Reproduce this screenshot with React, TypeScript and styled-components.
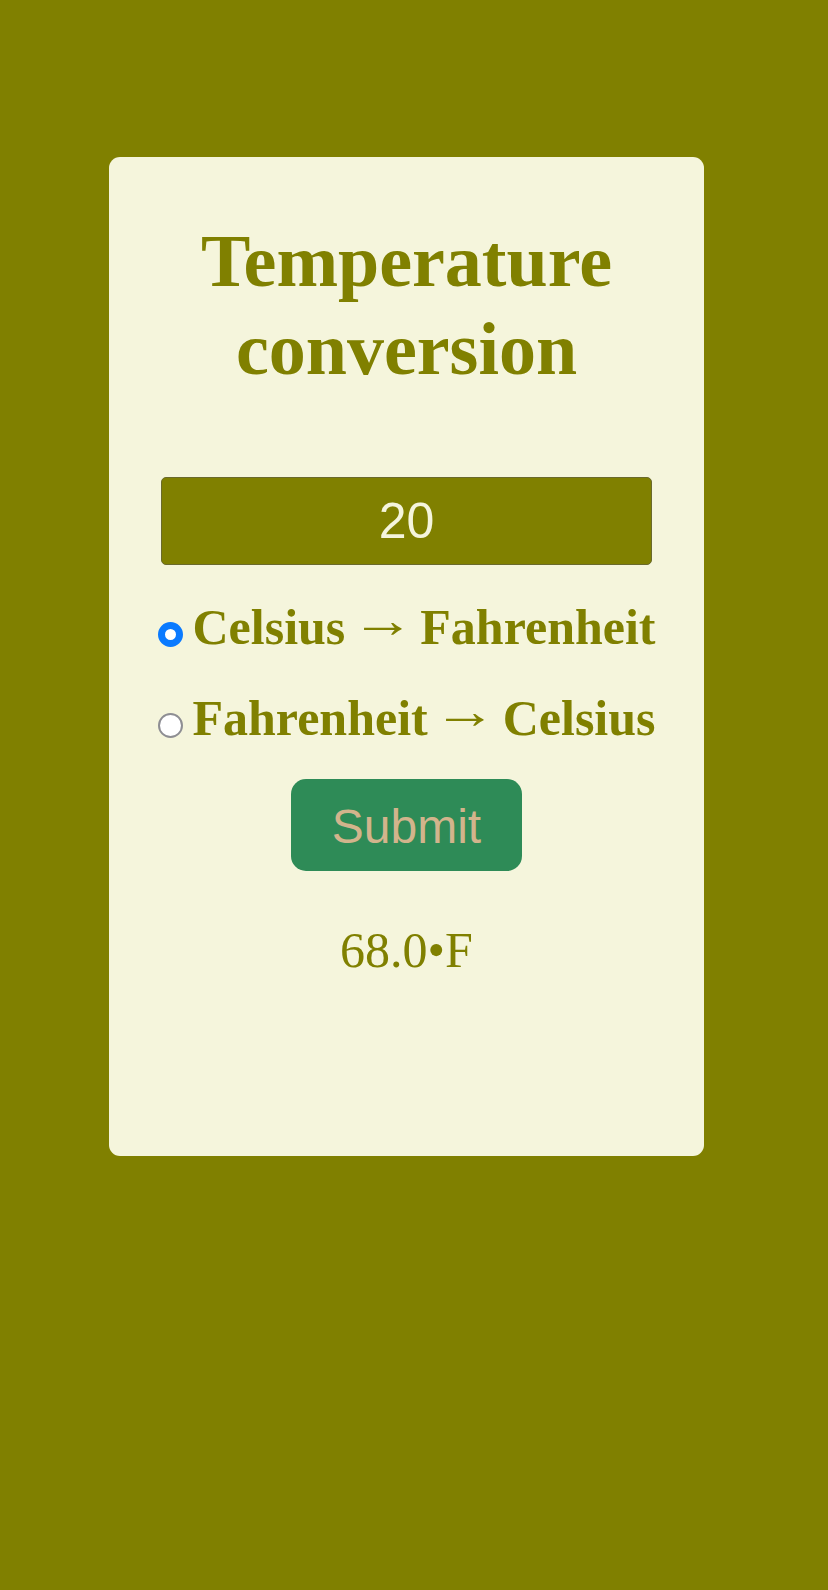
import React, { useState } from "react";
import styled, { createGlobalStyle } from "styled-components";

const GlobalStyle = createGlobalStyle`
  html, body {
    margin: 0;
    padding: 0;
    background: #808000;
  }
  body {
    font-family: "Liberation Serif", "Times New Roman", serif;
    min-height: 1590px;
  }
  * { box-sizing: border-box; }
`;

const Page = styled.div`
  display: flex;
  align-items: flex-start;
  padding: 157px 0 0 109px;
  min-height: 1590px;
`;

const Card = styled.form`
  width: 595px;
  background: #f5f5dc;
  border-radius: 11px;
  padding: 60px 52px 176px;
  display: flex;
  flex-direction: column;
  align-items: stretch;
`;

const Title = styled.h1`
  margin: 0;
  font-family: "Liberation Serif", "Times New Roman", serif;
  font-weight: 700;
  font-size: 74px;
  line-height: 88px;
  color: #808000;
  text-align: center;
`;

const NumberInput = styled.input`
  margin: 84px 0 16.5px;
  height: 88px;
  width: 100%;
  background: #808000;
  border: 1px solid #6a6a2c;
  border-radius: 5px;
  color: #f5f5dc;
  font-family: "Liberation Sans", Arial, sans-serif;
  font-size: 50px;
  text-align: center;
  outline: none;
  padding: 0;
`;

const OptionRow = styled.label`
  display: flex;
  justify-content: center;
  align-items: flex-start;
  gap: 10px;
  height: 91px;
  cursor: pointer;
`;

const RadioDot = styled.span<{ $checked: boolean }>`
  flex: none;
  width: 25px;
  height: 25px;
  margin-top: 40px;
  border-radius: 50%;
  background: #ffffff;
  border: ${(p) => (p.$checked ? "7.5px solid #0a7aff" : "2px solid #8e8e93")};
`;

const HiddenRadio = styled.input`
  display: none;
`;

const OptionText = styled.span`
  flex: none;
  font-family: "Liberation Serif", "Times New Roman", serif;
  font-weight: 700;
  font-size: 50px;
  line-height: 91px;
  color: #808000;
  white-space: nowrap;
`;

const Arrow = styled.span`
  display: inline-block;
  font-weight: 400;
  transform: translateY(-7px) scaleX(1.27);
`;

const SubmitButton = styled.button`
  align-self: center;
  margin-top: 15.5px;
  height: 92px;
  padding: 3px 41px 0;
  background: #2e8b57;
  color: #d2b48c;
  border: none;
  border-radius: 15px;
  font-family: "Liberation Sans", Arial, sans-serif;
  font-size: 48px;
  cursor: pointer;
`;

const Result = styled.p`
  margin: 49px 0 0;
  font-family: "Liberation Serif", "Times New Roman", serif;
  font-size: 50px;
  line-height: 60px;
  color: #808000;
  text-align: center;
`;

type Mode = "c2f" | "f2c";

export default function App() {
  const [value, setValue] = useState("20");
  const [mode, setMode] = useState<Mode>("c2f");
  const [result, setResult] = useState("68.0•F");

  const submit = (e: React.FormEvent) => {
    e.preventDefault();
    const n = parseFloat(value);
    if (isNaN(n)) return;
    if (mode === "c2f") setResult(`${((n * 9) / 5 + 32).toFixed(1)}•F`);
    else setResult(`${(((n - 32) * 5) / 9).toFixed(1)}•C`);
  };

  return (
    <>
      <GlobalStyle />
      <Page>
        <Card onSubmit={submit}>
          <Title>Temperature conversion</Title>
          <NumberInput
            type="text"
            value={value}
            onChange={(e) => setValue(e.target.value)}
          />
          <OptionRow>
            <HiddenRadio
              type="radio"
              name="mode"
              checked={mode === "c2f"}
              onChange={() => setMode("c2f")}
            />
            <RadioDot $checked={mode === "c2f"} />
            <OptionText>
              Celsius <Arrow>→</Arrow> Fahrenheit
            </OptionText>
          </OptionRow>
          <OptionRow>
            <HiddenRadio
              type="radio"
              name="mode"
              checked={mode === "f2c"}
              onChange={() => setMode("f2c")}
            />
            <RadioDot $checked={mode === "f2c"} />
            <OptionText>
              Fahrenheit <Arrow>→</Arrow> Celsius
            </OptionText>
          </OptionRow>
          <SubmitButton type="submit">Submit</SubmitButton>
          <Result>{result}</Result>
        </Card>
      </Page>
    </>
  );
}
